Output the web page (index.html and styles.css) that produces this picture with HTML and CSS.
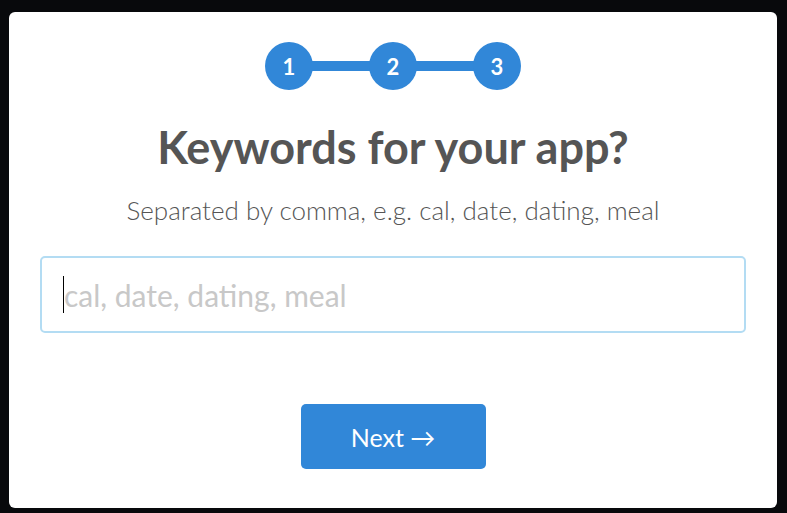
FILE: index.html
```html
<!DOCTYPE html>
<html>
<head>
<meta charset="utf-8">
<link rel="stylesheet" href="styles.css">
</head>
<body>
<div class="card">
  <div class="steps">
    <span class="step">1</span>
    <span class="bar"></span>
    <span class="step">2</span>
    <span class="bar"></span>
    <span class="step">3</span>
  </div>
  <h1 class="title">Keywords for your app?</h1>
  <p class="subtitle">Separated by comma, e.g. cal, date, dating, meal</p>
  <div class="field">
    <span class="caret"></span><span class="placeholder">cal, date, dating, meal</span>
  </div>
  <div class="actions">
    <button class="next">Next →</button>
  </div>
</div>
</body>
</html>
```
FILE: styles.css
```css
html, body {
  margin: 0;
  height: 100%;
  background: #08090c;
}
body {
  padding: 12px 10px 0 9px;
  box-sizing: border-box;
  font-family: Lato, "Open Sans", sans-serif;
}
.card {
  width: 768px;
  height: 496px;
  background: #fff;
  border-radius: 6px;
  box-sizing: border-box;
  padding: 30px 31px 0 31px;
  display: flex;
  flex-direction: column;
  align-items: center;
}
.steps {
  display: flex;
  align-items: center;
  height: 48px;
}
.step {
  width: 48px;
  height: 48px;
  border-radius: 50%;
  background: #3187d8;
  color: #fff;
  font-weight: 700;
  font-size: 22px;
  display: flex;
  align-items: center;
  justify-content: center;
}
.bar {
  width: 58px;
  height: 10px;
  background: #3187d8;
  margin: 0 -1px;
}
.title {
  margin: 31px 0 0 0;
  font-size: 45px;
  line-height: 52px;
  font-weight: 700;
  color: #555;
}
.subtitle {
  margin: 22px 0 0 0;
  font-family: "Lato Light", Lato, sans-serif;
  font-size: 26px;
  line-height: 30px;
  font-weight: 300;
  color: #555;
}
.field {
  margin-top: 31px;
  align-self: stretch;
  height: 77px;
  border: 2px solid #b3dcf3;
  border-radius: 5px;
  box-sizing: border-box;
  display: flex;
  align-items: center;
  padding-left: 21px;
}
.caret {
  width: 1px;
  height: 37px;
  background: #000;
}
.placeholder {
  font-size: 30px;
  color: #c8c8c8;
}
.actions {
  margin-top: 71px;
}
.next {
  width: 185px;
  height: 65px;
  border: none;
  border-radius: 5px;
  background: #3187d8;
  color: #fff;
  font-family: Lato, sans-serif;
  font-size: 25px;
  padding: 0;
}
```
